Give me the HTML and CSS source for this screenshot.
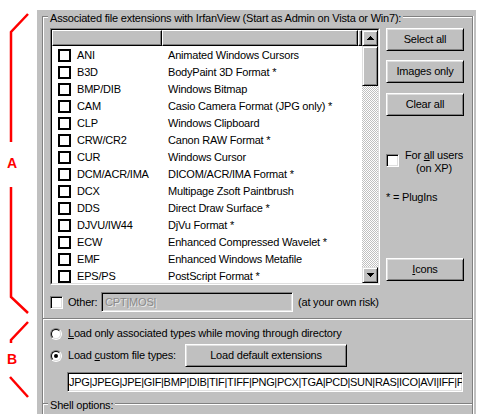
FILE: index.html
```html
<!DOCTYPE html>
<html>
<head>
<meta charset="utf-8">
<link rel="stylesheet" href="styles.css">
</head>
<body>
<div class="page">
  <div class="annot">
    <svg width="37" height="414" viewBox="0 0 37 414">
      <g fill="none" stroke="#ff0000" stroke-width="2.5">
        <polyline points="28,14 11,32 11,142"/>
        <polyline points="11,187 11,297 28,313"/>
        <polyline points="28,322 11,340 11,343"/>
        <polyline points="10,377 28,397"/>
      </g>
      <text x="12" y="168" class="mark">A</text>
      <text x="12" y="364" class="mark">B</text>
    </svg>
  </div>
  <div class="dialog">
    <div class="frame">
      <div class="legend">Associated file extensions with IrfanView (Start as Admin on Vista or Win7):</div>
      <div class="main">
        <div class="listbox">
          <div class="listbox-in">
            <div class="lv">
              <div class="lv-head"><div class="hcell c1"></div><div class="hcell c2"></div><div class="hcell c3"></div></div>
              <div class="lv-rows">
                <div class="row"><span class="chk"></span><span class="ext">ANI</span><span class="desc">Animated Windows Cursors</span></div>
                <div class="row"><span class="chk"></span><span class="ext">B3D</span><span class="desc">BodyPaint 3D Format *</span></div>
                <div class="row"><span class="chk"></span><span class="ext">BMP/DIB</span><span class="desc">Windows Bitmap</span></div>
                <div class="row"><span class="chk"></span><span class="ext">CAM</span><span class="desc">Casio Camera Format (JPG only) *</span></div>
                <div class="row"><span class="chk"></span><span class="ext">CLP</span><span class="desc">Windows Clipboard</span></div>
                <div class="row"><span class="chk"></span><span class="ext">CRW/CR2</span><span class="desc">Canon RAW Format *</span></div>
                <div class="row"><span class="chk"></span><span class="ext">CUR</span><span class="desc">Windows Cursor</span></div>
                <div class="row"><span class="chk"></span><span class="ext">DCM/ACR/IMA</span><span class="desc">DICOM/ACR/IMA Format *</span></div>
                <div class="row"><span class="chk"></span><span class="ext">DCX</span><span class="desc">Multipage Zsoft Paintbrush</span></div>
                <div class="row"><span class="chk"></span><span class="ext">DDS</span><span class="desc">Direct Draw Surface *</span></div>
                <div class="row"><span class="chk"></span><span class="ext">DJVU/IW44</span><span class="desc">DjVu Format *</span></div>
                <div class="row"><span class="chk"></span><span class="ext">ECW</span><span class="desc">Enhanced Compressed Wavelet *</span></div>
                <div class="row"><span class="chk"></span><span class="ext">EMF</span><span class="desc">Enhanced Windows Metafile</span></div>
                <div class="row"><span class="chk"></span><span class="ext">EPS/PS</span><span class="desc">PostScript Format *</span></div>
              </div>
            </div>
            <div class="sb">
              <div class="sb-btn"><svg width="7" height="4" viewBox="0 0 7 4" shape-rendering="crispEdges"><path d="M3 0h1v1h1v1h1v1h1v1H0V3h1V2h1V1h1z" fill="#000"/></svg></div>
              <div class="sb-thumb"></div>
              <div class="sb-track"></div>
              <div class="sb-btn"><svg width="7" height="4" viewBox="0 0 7 4" shape-rendering="crispEdges"><path d="M0 0h7v1H6v1H5v1H4v1H3V3H2V2H1V1H0z" fill="#000"/></svg></div>
            </div>
          </div>
        </div>
        <div class="side">
          <div class="btn">Select all</div>
          <div class="btn b2">Images only</div>
          <div class="btn b3">Clear all</div>
          <div class="allusers">
            <span class="cb3d"></span>
            <span class="lbl">For <u>a</u>ll users<br>(on XP)</span>
          </div>
          <div class="plugins">* = PlugIns</div>
          <div class="btn icons"><span><u>I</u>cons</span></div>
        </div>
      </div>
      <div class="other">
        <span class="cb3d"></span>
        <span class="lbl">Other:</span>
        <div class="edit-dis">CPT|MOS|</div>
        <span class="risk">(at your own risk)</span>
      </div>
      <div class="sep"></div>
      <div class="groupb">
        <div class="radio-row r1">
          <span class="radio"><span class="radio-in"></span></span>
          <span class="rlbl"><u>L</u>oad only associated types while moving through directory</span>
        </div>
        <div class="radio-row r2">
          <span class="radio"><span class="radio-in"><span class="dot"></span></span></span>
          <span class="rlbl w117">Load <u>c</u>ustom file types:</span>
          <div class="btn wide">Load default extensions</div>
        </div>
        <div class="edit">JPG|JPEG|JPE|GIF|BMP|DIB|TIF|TIFF|PNG|PCX|TGA|PCD|SUN|RAS|ICO|AVI|IFF|PSD|PBM|PGM</div>
      </div>
      <div class="shell">
        <div class="legend">Shell options:</div>
      </div>
    </div>
  </div>
</div>
</body>
</html>
```
FILE: styles.css
```css
* { box-sizing: border-box; }
html, body { margin: 0; padding: 0; }
body {
  width: 483px;
  height: 414px;
  overflow: hidden;
  background: #fff;
  font-family: "Liberation Sans", Arial, sans-serif;
  font-size: 11px;
  line-height: 13px;
  letter-spacing: -0.2px;
  color: #000;
}
.page { display: flex; height: 414px; }
.annot { width: 37px; flex: none; }
.annot svg { display: block; }
.mark {
  font-family: "Liberation Sans", Arial, sans-serif;
  font-size: 14px;
  font-weight: bold;
  fill: #ff0000;
  text-anchor: middle;
  letter-spacing: 0;
}
.dialog {
  width: 439px;
  flex: none;
  margin-top: 10px;
  height: 404px;
  background: #c0c0c0;
  padding: 6px 3px 0 5px;
  display: flex;
  flex-direction: column;
}
.frame {
  flex: 1;
  border: 1px solid #808080;
  border-bottom: none;
  box-shadow: inset 1px 1px 0 #fff, 1px 0 0 #fff;
}
.legend {
  width: fit-content;
  margin: -5px 0 0 5px;
  padding: 0 2px;
  background: #c0c0c0;
  white-space: nowrap;
  height: 13px;
}
.main { display: flex; margin-top: 3px; padding-left: 7px; }
.listbox {
  width: 330px;
  height: 257px;
  flex: none;
  border: 1px solid;
  border-color: #808080 #fff #fff #808080;
}
.listbox-in {
  height: 100%;
  border: 1px solid;
  border-color: #000 #dfdfdf #dfdfdf #000;
  background: #fff;
  display: flex;
}
.lv { flex: 1; min-width: 0; overflow: hidden; }
.lv-head { display: flex; height: 16px; }
.hcell {
  height: 16px;
  background: #c0c0c0;
  border: 1px solid;
  border-color: #fff #000 #000 #fff;
  box-shadow: inset -1px -1px 0 #808080;
}
.c1 { width: 110px; }
.c2 { width: 196px; }
.c3 { flex: 1; }
.lv-rows { padding-top: 1px; }
.row {
  display: flex;
  align-items: center;
  height: 17px;
  padding-left: 6px;
  white-space: nowrap;
}
.chk {
  width: 13px;
  height: 13px;
  flex: none;
  border: 2px solid #000;
  background: #fff;
}
.ext { width: 91px; margin-left: 6px; flex: none; }
.desc { flex: none; }
.sb { width: 16px; flex: none; display: flex; flex-direction: column; }
.sb-btn, .sb-thumb {
  background: #c0c0c0;
  border: 1px solid;
  border-color: #dfdfdf #000 #000 #dfdfdf;
  box-shadow: inset 1px 1px 0 #fff, inset -1px -1px 0 #808080;
  flex: none;
}
.sb-btn { height: 16px; display: flex; align-items: center; justify-content: center; }
.sb-btn svg { display: block; }
.sb-thumb { height: 40px; }
.sb-track {
  flex: 1;
  background: conic-gradient(#fff 25%, #c0c0c0 0 50%, #fff 0 75%, #c0c0c0 0);
  background-size: 2px 2px;
}
.side { width: 78px; margin-left: 6px; flex: none; display: flex; flex-direction: column; }
.btn {
  height: 23px;
  flex: none;
  background: #c0c0c0;
  border: 1px solid;
  border-color: #fff #000 #000 #fff;
  box-shadow: inset 1px 1px 0 #dfdfdf, inset -1px -1px 0 #808080;
  display: flex;
  align-items: center;
  justify-content: center;
  white-space: nowrap;
}
.b2 { margin-top: 9px; }
.b3 { margin-top: 10px; }
.allusers { display: flex; align-items: flex-start; margin-top: 33px; }
.allusers .cb3d { margin-top: 5px; }
.allusers .lbl { margin-left: 6px; text-align: center; white-space: nowrap; }
.cb3d {
  width: 13px;
  height: 13px;
  flex: none;
  border: 1px solid;
  border-color: #808080 #fff #fff #808080;
  box-shadow: inset 1px 1px 0 #000, inset -1px -1px 0 #dfdfdf;
  background: #fff;
}
.plugins { margin-top: 16px; white-space: nowrap; }
.icons { margin-top: 54px; }
.other {
  display: flex;
  align-items: center;
  height: 20px;
  margin-top: 7px;
  padding-left: 7px;
  white-space: nowrap;
}
.other .lbl { margin-left: 5px; width: 33px; flex: none; }
.edit-dis {
  width: 192px;
  height: 20px;
  flex: none;
  background: #c0c0c0;
  color: #8a8a8a;
  text-shadow: 1px 1px 0 #e8e8e8;
  border: 1px solid;
  border-color: #808080 #fff #fff #808080;
  box-shadow: inset 1px 1px 0 #000, inset -1px -1px 0 #dfdfdf;
  padding-left: 3px;
  display: flex;
  align-items: center;
}
.risk { margin-left: 5px; }
.sep {
  height: 2px;
  margin-top: 6px;
  border-top: 1px solid #808080;
  border-bottom: 1px solid #fff;
}
.groupb { padding-left: 7px; }
.radio-row { display: flex; align-items: center; white-space: nowrap; }
.r1 { height: 13px; margin-top: 7px; }
.r2 { height: 23px; margin-top: 4px; }
.radio {
  width: 12px;
  height: 12px;
  flex: none;
  border-radius: 50%;
  border: 1px solid;
  border-color: #808080 #fff #fff #808080;
}
.radio-in {
  display: flex;
  align-items: center;
  justify-content: center;
  width: 10px;
  height: 10px;
  border-radius: 50%;
  border: 1px solid;
  border-color: #000 #dfdfdf #dfdfdf #000;
  background: #fff;
}
.dot { width: 4px; height: 4px; border-radius: 50%; background: #000; }
.rlbl { margin-left: 6px; }
.w117 { width: 117px; flex: none; }
.wide { width: 162px; }
.edit {
  width: 396px;
  height: 20px;
  margin: 5px 0 0 17px;
  background: #fff;
  border: 1px solid;
  border-color: #808080 #fff #fff #808080;
  box-shadow: inset 1px 1px 0 #000, inset -1px -1px 0 #dfdfdf;
  padding: 0 0 0 1px;
  line-height: 18px;
  letter-spacing: -0.32px;
  white-space: nowrap;
  overflow: hidden;
}
.shell {
  margin-top: 11px;
  border-top: 1px solid #808080;
  box-shadow: inset 0 1px 0 #fff;
}
```
